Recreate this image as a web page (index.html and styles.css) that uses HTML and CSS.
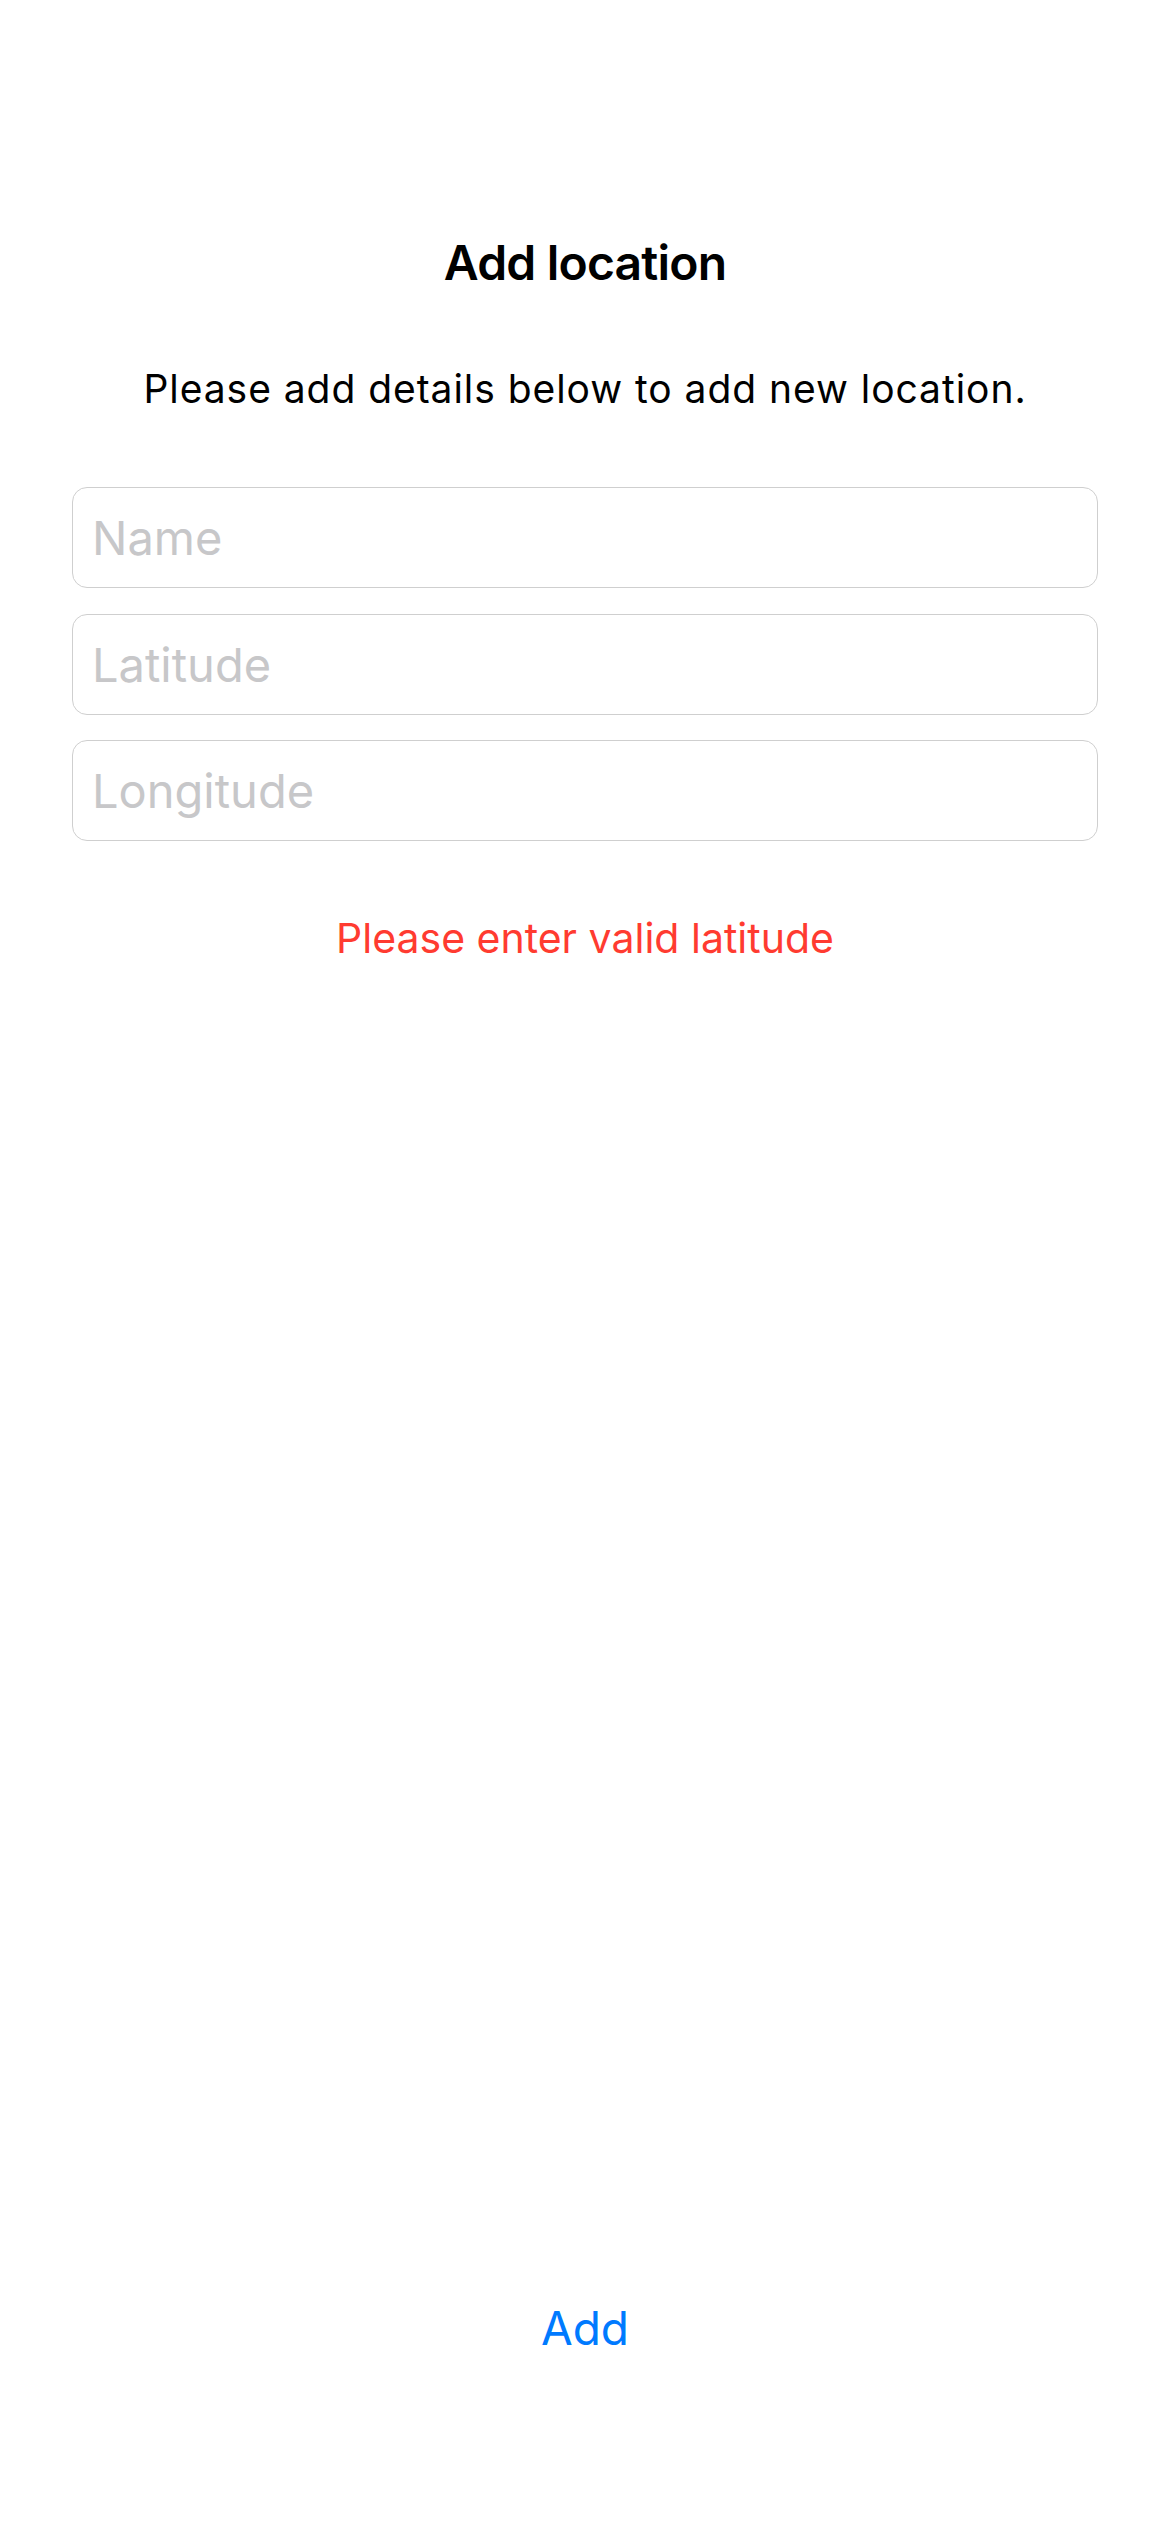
FILE: index.html
```html
<!DOCTYPE html>
<html lang="en">
<head>
<meta charset="utf-8">
<title>Add location</title>
<link rel="stylesheet" href="styles.css">
</head>
<body>
<main class="screen">
  <h1 class="title">Add location</h1>
  <p class="subtitle">Please add details below to add new location.</p>
  <form class="fields">
    <div class="field"><input class="input" type="text" placeholder="Name"></div>
    <div class="field"><input class="input" type="text" placeholder="Latitude"></div>
    <div class="field"><input class="input" type="text" placeholder="Longitude"></div>
  </form>
  <p class="error">Please enter valid latitude</p>
  <div class="spacer"></div>
  <button class="add-btn" type="button">Add</button>
</main>
</body>
</html>
```

FILE: styles.css
```css
* { box-sizing: border-box; }
html, body {
  margin: 0;
  padding: 0;
  background: #ffffff;
}
body {
  font-family: "Inter", "Liberation Sans", sans-serif;
  color: #000;
}
.screen {
  width: 1170px;
  height: 2532px;
  display: flex;
  flex-direction: column;
  padding: 233px 72px 176px;
}
.title {
  margin: 0;
  font-size: 48px;
  line-height: 60px;
  font-weight: 600;
  letter-spacing: -0.8px;
  text-align: center;
}
.subtitle {
  margin: 72px 0 0;
  font-size: 39px;
  line-height: 48px;
  font-weight: 400;
  letter-spacing: 0.95px;
  text-align: center;
}
.fields {
  margin: 74px 0 0;
  display: flex;
  flex-direction: column;
  gap: 25.5px;
}
.field {
  height: 101px;
  border: 1.5px solid #cfcfcf;
  border-radius: 15px;
  display: flex;
  align-items: center;
  padding: 0 19px;
}
.input {
  border: 0;
  outline: none;
  background: transparent;
  width: 100%;
  padding: 0;
  margin: 0;
  font-family: "Inter", "Liberation Sans", sans-serif;
  font-size: 47px;
  color: #000;
}
.input::placeholder {
  color: #c7c7c9;
}
.error {
  margin: 72px 0 0;
  font-size: 41px;
  line-height: 50px;
  color: #ff3b30;
  text-align: center;
}
.spacer { flex: 1; }
.add-btn {
  align-self: center;
  border: 0;
  background: transparent;
  padding: 0;
  margin: 0;
  font-family: "Inter", "Liberation Sans", sans-serif;
  font-size: 46px;
  line-height: 56px;
  color: #007aff;
}
```
